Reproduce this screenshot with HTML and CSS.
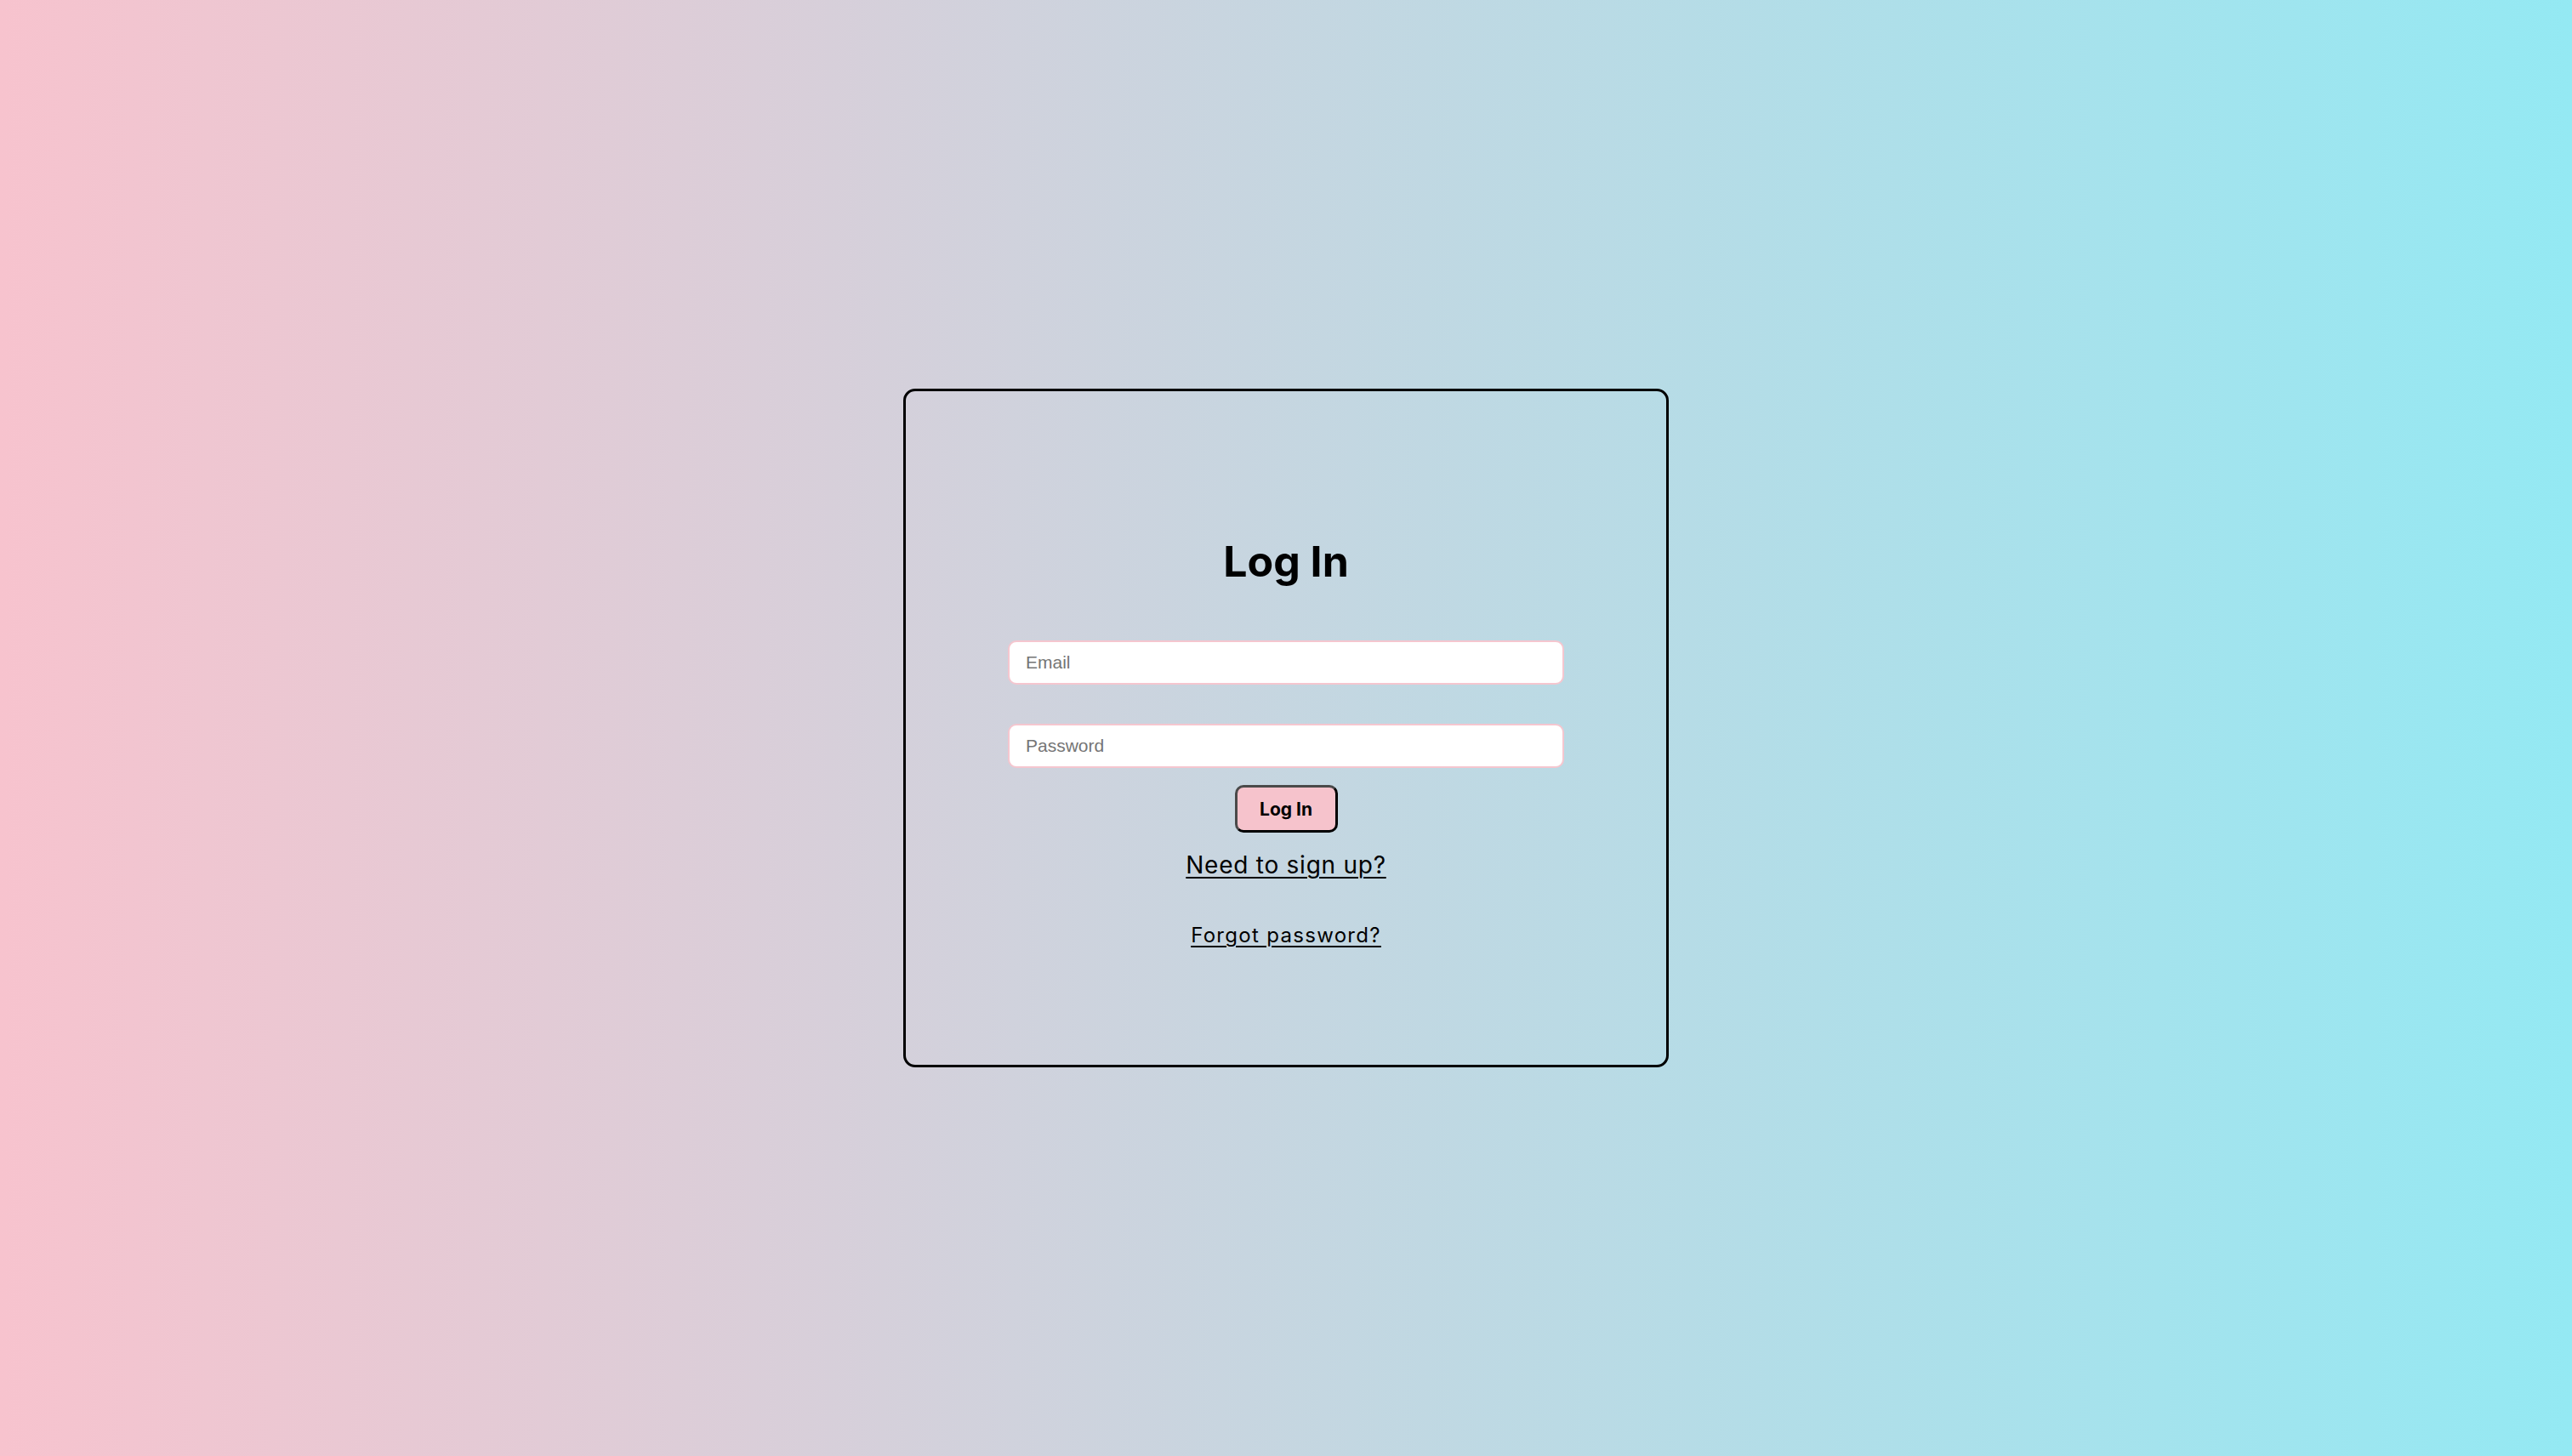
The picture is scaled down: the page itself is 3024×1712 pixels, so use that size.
FILE: index.html
```html
<!DOCTYPE html>
<html lang="en">
<head>
<meta charset="utf-8">
<title>Log In</title>
<link rel="stylesheet" href="styles.css">
</head>
<body>
<main class="page">
  <form class="card">
    <h1 class="title">Log In</h1>
    <input class="field" type="email" placeholder="Email">
    <input class="field field-second" type="password" placeholder="Password">
    <button class="btn" type="button">Log In</button>
    <a class="link link-signup" href="#">Need to sign up?</a>
    <a class="link link-forgot" href="#">Forgot password?</a>
  </form>
</main>
</body>
</html>
```

FILE: styles.css
```css
html, body {
  margin: 0;
  padding: 0;
  height: 100%;
}

body {
  background: linear-gradient(to right, #f7c3ce 0%, #94e9f3 100%);
  font-family: Inter, "Liberation Sans", sans-serif;
  color: #000;
}

.page {
  height: 100vh;
  display: flex;
  align-items: center;
  justify-content: center;
}

.card {
  box-sizing: border-box;
  width: 900px;
  height: 798px;
  border: 3px solid #000;
  border-radius: 14px;
  padding-top: 170px;
  display: flex;
  flex-direction: column;
  align-items: center;
}

.title {
  margin: 0;
  font-size: 50px;
  line-height: 60px;
  font-weight: 700;
  letter-spacing: 0;
}

.field {
  box-sizing: border-box;
  width: 654px;
  height: 52px;
  margin-top: 63px;
  border: 2px solid #f5c6cf;
  border-radius: 10px;
  background: #fff;
  padding: 0 19px;
  font-family: "Liberation Sans", Arial, sans-serif;
  font-size: 21px;
  color: #222;
  outline: none;
}

.field::placeholder {
  color: #757575;
}

.field-second {
  margin-top: 46px;
}

.btn {
  box-sizing: border-box;
  width: 121px;
  height: 56px;
  margin-top: 20px;
  background: #f6c3cc;
  border: 3px solid;
  border-color: #4a4a4a #000 #000 #4a4a4a;
  border-radius: 10px;
  font-family: Inter, "Liberation Sans", sans-serif;
  font-weight: 700;
  font-size: 21px;
  color: #000;
  padding: 0;
}

.link {
  color: #000;
  text-decoration: underline;
  text-decoration-thickness: 2px;
  text-underline-offset: 4px;
}

.link-signup {
  margin-top: 21px;
  font-size: 28px;
  line-height: 34px;
  letter-spacing: 0.75px;
}

.link-forgot {
  margin-top: 51px;
  font-size: 24px;
  line-height: 29px;
  letter-spacing: 1.3px;
}
```
